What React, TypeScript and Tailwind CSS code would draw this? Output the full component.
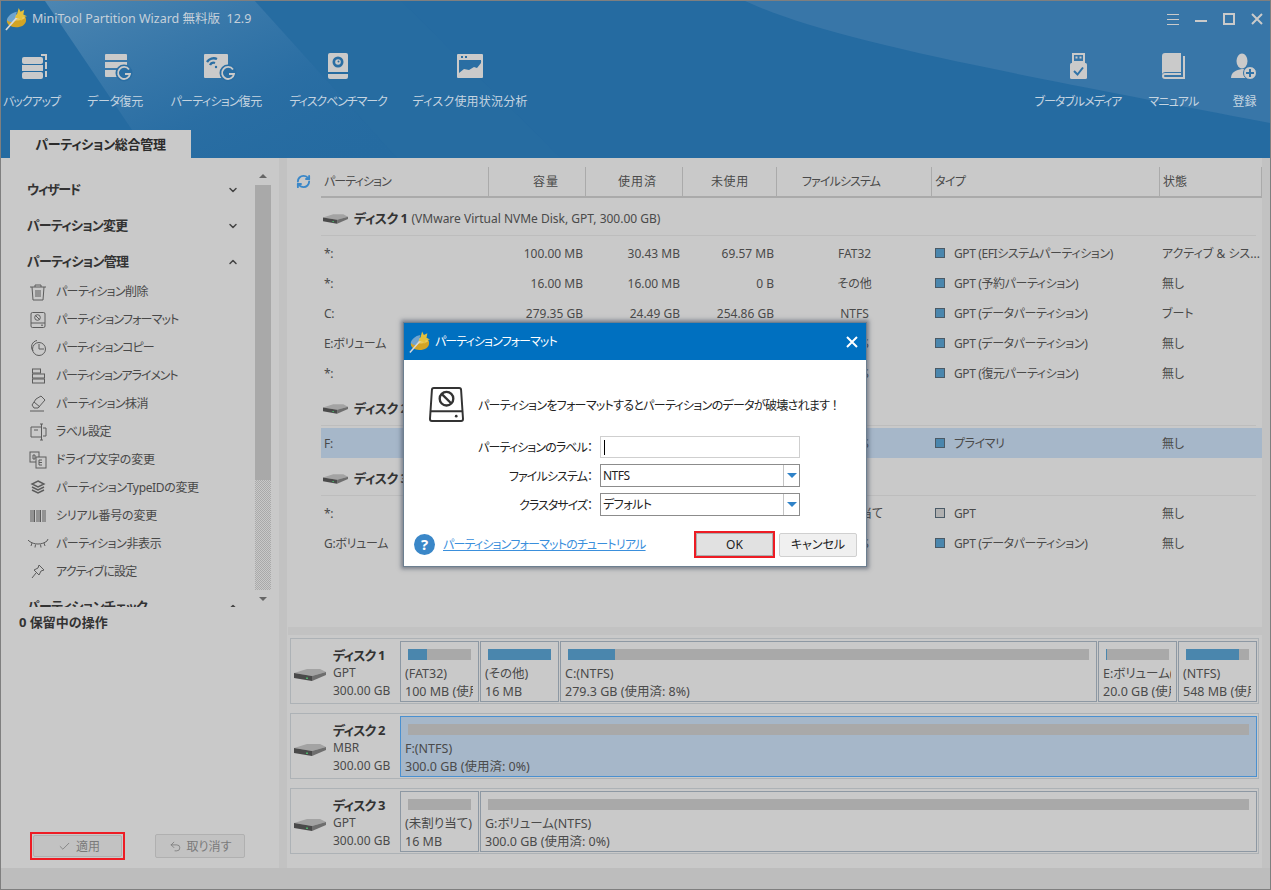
import React from "react";
import { ChevronDown, ChevronUp, RefreshCw, Check, Undo2 } from "lucide-react";

const Logo = ({ className }: { className: string }) => (
  <svg viewBox="0 0 24 24" className={className}>
    <path d="M2 14c0-4 6-7 12-7s9 2 9 6c0 5-5 8-11 8S2 18 2 14z" fill="#d3a425" />
    <path d="M4 12c2-3 6-5 10-5s7 1 8 4c-3 3-15 4-18 1z" fill="#e8c95c" />
    <path d="M2 13c1-4 5-8 11-9l-3 11c-3 1-6 0-8-2z" fill="#6fa4cf" />
    <path d="M1 24L15 8" stroke="#d8d8d8" strokeWidth="1.8" />
    <path d="M15 0l2 4 4-2-1 5 4 2-5 1-1 4-3-3-4 0 2-4z" fill="#e4c13c" />
  </svg>
);

const Redo = ({ x, y }: { x: number; y: number }) => (
  <g transform={`translate(${x} ${y})`}>
    <circle cx="0" cy="0" r="8.5" fill="#2a6ea3" />
    <path d="M5 -3.500A6 6 0 1 0 6 1H1" fill="none" stroke="#cacaca" strokeWidth="1.8" />
  </g>
);

const toolIcons: Record<string, React.ReactNode> = {
  backup: (
    <g fill="#cacaca">
      <rect x="4" y="5" width="21" height="7" rx="2" />
      <rect x="4" y="13" width="21" height="6" />
      <rect x="4" y="20" width="21" height="7" rx="2" />
      <path d="M23 2h6v6h-2V4h-4zM27 10h2v7h-2zM27 19h2v6h-2z" />
    </g>
  ),
  data: (
    <g fill="#cacaca">
      <path d="M4 3a1 1 0 0 1 1-1h20a1 1 0 0 1 1 1v5H4z" />
      <rect x="4" y="10" width="22" height="6" />
      <path d="M4 18h14v7H5a1 1 0 0 1-1-1z" />
      <Redo x={23} y={21} />
    </g>
  ),
  part: (
    <g>
      <path d="M2 3a1 1 0 0 1 1-1h22a1 1 0 0 1 1 1v22a1 1 0 0 1-1 1H3a1 1 0 0 1-1-1z" fill="#cacaca" />
      <path d="M5 10a8 8 0 0 1 10-3M8 13a4 4 0 0 1 5-2" fill="none" stroke="#2a6ea3" strokeWidth="2.4" />
      <circle cx="14" cy="15" r="1.2" fill="#2a6ea3" />
      <Redo x={26} y={21} />
    </g>
  ),
  bench: (
    <g>
      <path d="M4 3a2 2 0 0 1 2-2h16a2 2 0 0 1 2 2v17H4z" fill="#cacaca" />
      <path d="M4 22h20v3a2 2 0 0 1-2 2H6a2 2 0 0 1-2-2z" fill="#cacaca" />
      <circle cx="14" cy="10" r="5.500" fill="#2a6ea3" />
      <circle cx="14" cy="10" r="2.800" fill="#cacaca" />
      <circle cx="14.500" cy="9.500" r="1" fill="#2a6ea3" />
    </g>
  ),
  usage: (
    <g>
      <path d="M1 3a1 1 0 0 1 1-1h24a1 1 0 0 1 1 1v22a1 1 0 0 1-1 1H2a1 1 0 0 1-1-1z" fill="#cacaca" />
      <rect x="3" y="8" width="22" height="16" fill="#2a6ea3" />
      <rect x="5" y="4" width="2" height="2" fill="#2a6ea3" />
      <rect x="9" y="4" width="2" height="2" fill="#2a6ea3" />
      <path d="M3 21l5-4 5 1 5-3 3 1 4-5v13H3z" fill="#cacaca" />
      <path d="M3 19l5-4 5 1 5-3 3 1 4-5" fill="none" stroke="#2a6ea3" strokeWidth="1" />
    </g>
  ),
  usb: (
    <g>
      <path d="M8 1h13v10H8zM10 3v6h9V3z" fill="#cacaca" fillRule="evenodd" />
      <rect x="11.500" y="4.500" width="2" height="2" fill="#cacaca" />
      <rect x="15.500" y="4.500" width="2" height="2" fill="#cacaca" />
      <rect x="6" y="11" width="17" height="16" rx="1.500" fill="#cacaca" />
      <path d="M10 19l3.500 3.500L19 15.500" fill="none" stroke="#2f73a8" strokeWidth="2" />
    </g>
  ),
  book: (
    <g fill="#cacaca">
      <path d="M2 4a3 3 0 0 1 3-3h16v19H6a4 4 0 0 0-4 2z" />
      <path d="M23 4h2v23H5a3 3 0 0 1-3-3 3 3 0 0 1 3-3h16v2H5a1 1 0 0 0 0 2h18V4z" />
    </g>
  ),
  user: (
    <g>
      <ellipse cx="11" cy="9" rx="5.500" ry="7.500" fill="#cacaca" />
      <path d="M0 26c0-6 5-8 11-9 5 0 8 3 8 9z" fill="#cacaca" />
      <circle cx="19" cy="21" r="6.500" fill="#cacaca" stroke="#2f73a8" />
      <path d="M19 17v8M15 21h8" stroke="#2f73a8" strokeWidth="2" />
    </g>
  ),
};

const Tool = ({ icon, label, width, track }: { icon: string; label: string; width: string; track: string }) => (
  <div className={`flex flex-col items-center ${width}`}>
    <svg viewBox="0 0 28 28" className="w-[28px] h-[28px] overflow-visible">
      {toolIcons[icon]}
    </svg>
    <span className={`mt-[13px] text-[12px] leading-[18px] text-[#c5d4e0] whitespace-nowrap ${track}`}>{label}</span>
  </div>
);

const DiskIcon = ({ className }: { className: string }) => (
  <svg viewBox="0 0 32 12" className={className}>
    <path d="M0 4L13 0h13l6 3-14 4z" fill="#a3a3a3" />
    <path d="M0 4l18 3v5L0 9z" fill="#4a4a4a" />
    <path d="M18 7l14-4v3L18 12z" fill="#6e6e6e" />
    <rect x="12" y="8.500" width="2" height="1.500" fill="#4caf6a" />
  </svg>
);

const s = { fill: "none", stroke: "#5c5c5c", strokeWidth: 1 };
const menuIcons: React.ReactNode[] = [
  <g {...s}><path d="M1 4h16M6 4V2h6v2M3 4l1 13h10l1-13M7 7v7M9 7v7M11 7v7" /></g>,
  <g {...s}><rect x="2" y="1.500" width="14" height="15" rx="1.500" /><path d="M2 12h14M12 14.200h2" /><circle cx="8.500" cy="6.500" r="2.800" /><path d="M6.500 4.500l4 4" /></g>,
  <g {...s}><path d="M4 12A6.500 6.500 0 0 1 8 1.500" /><circle cx="10" cy="10" r="6.500" /><path d="M10 5v5h5" /></g>,
  <g {...s}><rect x="3.500" y="2" width="8" height="4" /><rect x="3.500" y="7" width="12" height="4" /><rect x="3.500" y="12" width="12" height="4" /></g>,
  <g {...s}><path d="M7 4l5-3 4 4-7 8H5l-2-3zM5 7l6 5M1 16h14" /></g>,
  <g {...s}><path d="M12 4H2v10h10M14 1h-3M14 17h-3M12.500 1v16M14 5h3v8h-3M5 7h4" /></g>,
  <g {...s}><rect x="1" y="1" width="9" height="10" fill="#c9c9c9" /><rect x="7" y="6" width="10" height="11" fill="#c9c9c9" /><path d="M4 4v4h2v-4zM10 9H13M10 11.500H13M10 14h3M10 9v5" /></g>,
  <g {...s}><path d="M9 2l6 3-6 3-6-3zM3 8l6 3 6-3M3 11l6 3 6-3" strokeWidth="1.400" /></g>,
  <g {...s}><path d="M2 3v12M4 3v12M5.500 3v12M8 3v12M10 3v12M11.500 3v12M14 3v12M16 3v12" /></g>,
  <g {...s}><path d="M0 6c5 4 13 4 18 0M3 8l-1 3M6.500 9.500l-.5 3M11.500 9.500l.5 3M15 8l1 3M0 6l-1-1M18 6l1-2" /></g>,
  <g {...s}><path d="M10 2l5 5-3 1-2 4-5-5 4-2zM7 10l-4 5" /></g>,
];

const menu = [
  { t: "パーティション削除", c: "tracking-[-0.6px]" },
  { t: "パーティションフォーマット", c: "tracking-[-0.85px]" },
  { t: "パーティションコピー", c: "tracking-[-1px]" },
  { t: "パーティションアライメント", c: "tracking-[-1.1px]" },
  { t: "パーティション抹消", c: "tracking-[-0.6px]" },
  { t: "ラベル設定", c: "tracking-[-0.6px]" },
  { t: "ドライブ文字の変更", c: "tracking-[-0.2px]" },
  { t: "パーティションTypeIDの変更", c: "tracking-[-0.35px]" },
  { t: "シリアル番号の変更", c: "tracking-[-0.2px]" },
  { t: "パーティション非表示", c: "tracking-[-0.4px]" },
  { t: "アクティブに設定", c: "tracking-[-0.8px]" },
];

const SideHead = ({ label, open, track }: { label: string; open?: boolean; track: string }) => (
  <div className="h-[36px] flex items-center justify-between pl-[26px] pr-[16px] shrink-0">
    <span className={`text-[13px] font-bold text-[#333] ${track}`}>{label}</span>
    {open ? <ChevronUp size={12} strokeWidth={3} color="#444" /> : <ChevronDown size={12} strokeWidth={3} color="#444" />}
  </div>
);

type Row = { name: string; cap: string; used: string; free: string; fs: string; type: string; state: string; sel?: boolean; gray?: boolean };

const disk1: Row[] = [
  { name: "*:", cap: "100.00 MB", used: "30.43 MB", free: "69.57 MB", fs: "FAT32", type: "GPT (EFIシステムパーティション)", state: "アクティブ & シス..." },
  { name: "*:", cap: "16.00 MB", used: "16.00 MB", free: "0 B", fs: "その他", type: "GPT (予約パーティション)", state: "無し" },
  { name: "C:", cap: "279.35 GB", used: "24.49 GB", free: "254.86 GB", fs: "NTFS", type: "GPT (データパーティション)", state: "ブート" },
  { name: "E:ボリューム", cap: "20.00 GB", used: "104.00 MB", free: "19.90 GB", fs: "NTFS", type: "GPT (データパーティション)", state: "無し" },
  { name: "*:", cap: "548.00 MB", used: "467.00 MB", free: "81.00 MB", fs: "NTFS", type: "GPT (復元パーティション)", state: "無し" },
];
const disk2: Row[] = [
  { name: "F:", cap: "300.00 GB", used: "108.00 MB", free: "299.89 GB", fs: "NTFS", type: "プライマリ", state: "無し", sel: true },
];
const disk3: Row[] = [
  { name: "*:", cap: "16.00 MB", used: "0 B", free: "16.00 MB", fs: "未割り当て", type: "GPT", state: "無し", gray: true },
  { name: "G:ボリューム", cap: "300.00 GB", used: "108.00 MB", free: "299.89 GB", fs: "NTFS", type: "GPT (データパーティション)", state: "無し" },
];

const cols = "grid grid-cols-[168px_97px_97px_94px_155px_228px_102px]";

const TableRow = ({ r }: { r: Row }) => (
  <div className={`${cols} h-[30px] items-center text-[12px] text-[#4a4a4a] whitespace-nowrap ${r.sel ? "bg-[#a6b7c9]" : ""}`}>
    <span className="pl-[3px] pt-px tracking-[-0.3px]">{r.name}</span>
    <span className="text-right pr-[3px] pt-px">{r.cap}</span>
    <span className="text-right pr-[3px] pt-px">{r.used}</span>
    <span className="text-right pr-[3px] pt-px">{r.free}</span>
    <span className="text-center pt-px">{r.fs}</span>
    <span className="flex items-center pl-[3px]">
      <span className={`w-[10px] h-[10px] border border-[#4a5a66] mr-[9px] ${r.gray ? "bg-[#b0b0b0]" : "bg-[#4a86ad]"}`} />
      <span className="pt-px tracking-[-0.4px]">{r.type}</span>
    </span>
    <span className="pl-[2px] pt-px">{r.state}</span>
  </div>
);

const DiskHead = ({ name, info }: { name: string; info?: string }) => (
  <div className="h-[38px] flex items-center pl-[2px] pt-[5px] border-b border-[#bdbdbd] mb-[2px] mr-[6px] text-[#4a4a4a] whitespace-nowrap">
    <DiskIcon className="w-[25px] h-[10px] mr-[6px]" />
    <span className="text-[13px] font-bold text-[#333] tracking-[-0.5px]">{name}</span>
    {info && <span className="text-[12px] ml-[4px]">{info}</span>}
  </div>
);

type Seg = { l1: string; l2: string; fill?: string; wide?: boolean };

const Segment = ({ seg, sel }: { seg: Seg; sel?: boolean }) => (
  <div className={`h-[61px] border pt-[7px] text-[12.5px] leading-[18px] text-[#4a4a4a] ${seg.wide ? "flex-1 min-w-0" : "w-[79px] shrink-0"} ${sel ? "border-[#4a90d0] bg-[#a6b7c9]" : "border-[#8d98a3]"}`}>
    <div className="mx-[7px] h-[11px] bg-[#a9a9a9]">
      {seg.fill && <div className={`h-full bg-[#4a86ad] ${seg.fill}`} />}
    </div>
    <div className="ml-[4px] mr-[5px] mt-[5px] overflow-hidden whitespace-nowrap">
      <div>{seg.l1}</div>
      <div>{seg.l2}</div>
    </div>
  </div>
);

const DiskCard = ({ name, kind, segs, sel }: { name: string; kind: string; segs: Seg[]; sel?: boolean }) => (
  <div className="h-[66px] flex items-center border border-[#adb2b6] pr-[1px]">
    <div className="w-[109px] shrink-0 flex items-center pl-[3px]">
      <DiskIcon className="w-[32px] h-[12px] mt-[8px] mr-[7px]" />
      <div className="pt-[4px] text-[12px] leading-[18px] text-[#4a4a4a] whitespace-nowrap">
        <div className="text-[13px] font-bold text-[#333] tracking-[-0.8px]">{name}</div>
        <div>{kind}</div>
        <div>300.00 GB</div>
      </div>
    </div>
    <div className="flex-1 min-w-0 flex gap-[1px]">
      {segs.map((seg, i) => (
        <Segment key={i} seg={seg} sel={sel} />
      ))}
    </div>
  </div>
);

const Combo = ({ value }: { value: string }) => (
  <div className="h-[23px] flex items-center border border-[#8c8c8c] text-[12px] text-[#222]">
    <span className="flex-1 pl-[2px] pt-px tracking-[-0.5px]">{value}</span>
    <span className="w-[16px] h-full border-l border-[#c4c4c4] flex items-center justify-center">
      <span className="w-0 h-0 border-x-[5px] border-x-transparent border-t-[5px] border-t-[#2f82c8]" />
    </span>
  </div>
);

export default function App() {
  return (
    <div className="relative w-[1271px] h-[890px] flex flex-col overflow-hidden border border-[#7f7f7f] bg-[#c9c9c9] [font-family:'Noto_Sans','Noto_Sans_CJK_JP',sans-serif] [font-feature-settings:'palt']">
      {/* header */}
      <div className="relative h-[157px] shrink-0 flex flex-col bg-[#256ba1]">
        <svg className="absolute inset-0 w-full h-full" viewBox="0 0 1269 157" preserveAspectRatio="none">
          <defs>
            <linearGradient id="streak" x1="0" y1="0" x2="1" y2="1">
              <stop offset="0" stopColor="#5a8fb8" stopOpacity="0.75" />
              <stop offset="0.6" stopColor="#2d70a5" stopOpacity="0.6" />
              <stop offset="1" stopColor="#256ba1" stopOpacity="0" />
            </linearGradient>
          </defs>
          <path d="M44 0L150 157H396L254 0z" fill="url(#streak)" />
          <path d="M254 0L396 157H560L400 0z" fill="#2a6ea3" fillOpacity="0.25" />
          <path d="M744 0C830 40 1000 70 1269 122V0z" fill="#3876a8" />
        </svg>
        <div className="relative h-[36px] shrink-0 flex items-center pl-[4px]">
          <Logo className="w-[22px] h-[24px] mr-[5px]" />
          <span className="text-[12.500px] text-[#c5d0da]">MiniTool Partition Wizard 無料版&nbsp; 12.9</span>
          <div className="ml-auto flex items-center gap-[16px] pr-[7px]">
            <svg width="12" height="11" viewBox="0 0 12 11" stroke="#cacaca"><path d="M0 .5h12M0 5.500h12M0 10.500h12" /></svg>
            <svg width="12" height="11" viewBox="0 0 12 11" stroke="#cacaca" strokeWidth="2"><path d="M0 7h12" /></svg>
            <svg width="12" height="12" viewBox="0 0 12 12" fill="none" stroke="#cacaca" strokeWidth="2"><rect x="1" y="1" width="10" height="10" /></svg>
            <svg width="12" height="12" viewBox="0 0 12 12" stroke="#cacaca" strokeWidth="2"><path d="M1 1l10 10M11 1L1 11" /></svg>
          </div>
        </div>
        <div className="relative flex pt-[15px]">
          <Tool icon="backup" label="バックアップ" width="w-[61px]" track="tracking-[-1.1px]" />
          <Tool icon="data" label="データ復元" width="w-[106px]" track="tracking-[-0.4px]" />
          <Tool icon="part" label="パーティション復元" width="w-[96px]" track="tracking-[-0.7px]" />
          <Tool icon="bench" label="ディスクベンチマーク" width="w-[148px]" track="tracking-[-1.1px]" />
          <Tool icon="usage" label="ディスク使用状況分析" width="w-[116px]" track="tracking-[0.2px]" />
          <div className="ml-auto mr-[2px] flex">
            <Tool icon="usb" label="ブータブルメディア" width="w-[96px]" track="tracking-[-1px]" />
            <Tool icon="book" label="マニュアル" width="w-[95px]" track="tracking-[-0.8px]" />
            <Tool icon="user" label="登録" width="w-[47px]" track="" />
          </div>
        </div>
        <div className="relative mt-auto ml-[9px] w-[181px] h-[28px] pt-[2px] bg-[#c9c9c9] flex items-center justify-center text-[13px] font-bold text-[#2b2b2b] tracking-[-0.3px]">
          パーティション総合管理
        </div>
      </div>

      {/* body */}
      <div className="flex-1 min-h-0 flex">
        {/* left */}
        <div className="w-[278px] shrink-0 flex flex-col">
          <div className="h-[449px] shrink-0 flex overflow-hidden">
            <div className="w-[254px] shrink-0 pt-[14px]">
              <SideHead label="ウィザード" track="tracking-[-1.4px]" />
              <SideHead label="パーティション変更" track="tracking-[-0.8px]" />
              <SideHead label="パーティション管理" track="tracking-[-0.7px]" open />
              <div className="-mt-[2px] mb-[3px]">
                {menu.map((m, i) => (
                  <div key={m.t} className="h-[28px] flex items-center pl-[28px] text-[12px] text-[#484848] whitespace-nowrap">
                    <svg viewBox="0 0 18 18" className="w-[18px] h-[18px] mr-[9px] overflow-visible">{menuIcons[i]}</svg>
                    <span className={m.c}>{m.t}</span>
                  </div>
                ))}
              </div>
              <SideHead label="パーティションチェック" track="tracking-[-0.7px]" open />
            </div>
            <div className="w-[16px] shrink-0 flex flex-col items-center">
              <div className="h-[27px] w-full flex items-center justify-center pt-[8px]">
                <span className="w-0 h-0 border-x-[4px] border-x-transparent border-b-[4px] border-b-[#666]" />
              </div>
              <div className="h-[295px] w-full bg-[#a9a9a9]" />
              <div className="h-[110px] w-full bg-[repeating-conic-gradient(#a9a9a9_0_25%,#c9c9c9_0_50%)] bg-[length:2px_2px]" />
              <div className="flex-1 w-full flex items-center justify-center">
                <span className="w-0 h-0 border-x-[4px] border-x-transparent border-t-[4px] border-t-[#666]" />
              </div>
            </div>
          </div>
          <div className="pl-[18px] pt-[6px] text-[13px] font-bold text-[#333]">0 保留中の操作</div>
          <div className="mt-auto pb-[8px] pl-[29px] flex items-center">
            <div className="w-[95px] h-[28px] border-2 border-[#ed1c24] p-[1px]">
              <div className="h-full flex items-center justify-center gap-[5px] pl-[3px] border border-[#b0b0b0] rounded-[2px] bg-[#c2c2c2] text-[12px] text-[#7a7a7a]">
                <Check size={13} strokeWidth={1.500} /><span className="pt-[2px]">適用</span>
              </div>
            </div>
            <div className="ml-[30px] w-[90px] h-[24px] flex items-center justify-center gap-[5px] border border-[#b0b0b0] rounded-[2px] bg-[#c2c2c2] text-[12px] text-[#7a7a7a]">
              <Undo2 size={13} strokeWidth={1.500} /><span className="pt-[2px]">取り消す</span>
            </div>
          </div>
        </div>
        <div className="w-[8px] shrink-0 bg-[#c2c2c2]" />

        {/* right */}
        <div className="flex-1 min-w-0 flex flex-col">
          <div className="h-[469px] shrink-0 pt-[9px]">
            <div className="flex h-[31px]">
              <div className="w-[34px] flex justify-center pt-[7px] pr-[2px]">
                <RefreshCw size={15} strokeWidth={3} color="#3a87c8" />
              </div>
              <div className={`${cols} flex-1 border-b-2 border-[#aaa] text-[12px] text-[#4a4a4a] items-center whitespace-nowrap`}>
                <span className="h-full flex items-center pl-[3px] pt-px border-r border-[#aaa] tracking-[-0.9px]">パーティション</span>
                <span className="h-full flex items-center justify-end pr-[26px] pt-px border-r border-[#aaa] tracking-[1px]">容量</span>
                <span className="h-full flex items-center justify-end pr-[25px] pt-px border-r border-[#aaa] tracking-[1px]">使用済</span>
                <span className="h-full flex items-center justify-end pr-[27px] pt-px border-r border-[#aaa] tracking-[0.7px]">未使用</span>
                <span className="h-full flex items-center justify-center pr-[26px] pt-px border-r border-[#aaa] tracking-[-0.9px]">ファイルシステム</span>
                <span className="h-full flex items-center pl-[3px] pt-px border-r border-[#aaa] tracking-[-0.5px]">タイプ</span>
                <span className="h-full flex items-center pl-[3px] pt-px border-r border-[#aaa]">状態</span>
              </div>
            </div>
            <div className="pl-[34px]">
              <DiskHead name="ディスク 1" info="(VMware Virtual NVMe Disk, GPT, 300.00 GB)" />
              {disk1.map((r, i) => <TableRow key={i} r={r} />)}
              <DiskHead name="ディスク 2" info="(VMware Virtual NVMe Disk, MBR, 300.00 GB)" />
              {disk2.map((r, i) => <TableRow key={i} r={r} />)}
              <DiskHead name="ディスク 3" info="(VMware Virtual NVMe Disk, GPT, 300.00 GB)" />
              {disk3.map((r, i) => <TableRow key={i} r={r} />)}
            </div>
          </div>
          <div className="h-[8px] shrink-0 bg-[#c2c2c2] ml-px" />
          <div className="pl-[3px] pr-[3px] pt-[3px] flex flex-col gap-[9px]">
            <DiskCard
              name="ディスク 1"
              kind="GPT"
              segs={[
                { l1: "(FAT32)", l2: "100 MB (使用済: 30%)", fill: "w-[30%]" },
                { l1: "(その他)", l2: "16 MB", fill: "w-full" },
                { l1: "C:(NTFS)", l2: "279.3 GB (使用済: 8%)", fill: "w-[9%]", wide: true },
                { l1: "E:ボリューム(NTFS)", l2: "20.0 GB (使用済: 0%)", fill: "w-[1px]" },
                { l1: "(NTFS)", l2: "548 MB (使用済: 85%)", fill: "w-[84%]" },
              ]}
            />
            <DiskCard name="ディスク 2" kind="MBR" sel segs={[{ l1: "F:(NTFS)", l2: "300.0 GB (使用済: 0%)", wide: true }]} />
            <DiskCard
              name="ディスク 3"
              kind="GPT"
              segs={[
                { l1: "(未割り当て)", l2: "16 MB" },
                { l1: "G:ボリューム(NTFS)", l2: "300.0 GB (使用済: 0%)", wide: true },
              ]}
            />
          </div>
        </div>
        <div className="w-[8px] shrink-0 bg-[#c2c2c2]" />
      </div>

      <div className="h-[21px] shrink-0 bg-[#bdbdbd]" />

      {/* dialog */}
      <div className="absolute left-[402px] top-[321px] w-[464px] h-[245px] flex flex-col bg-white border border-[#6d7f90] shadow-[0_0_4px_2px_rgba(60,70,90,0.55)]">
        <div className="h-[37px] shrink-0 flex items-center bg-[#0070c0] pl-[5px] pr-[8px]">
          <Logo className="w-[21px] h-[24px] mr-[5px]" />
          <span className="text-[12px] text-white tracking-[-0.9px]">パーティションフォーマット</span>
          <svg className="ml-auto" width="12" height="12" viewBox="0 0 12 12" stroke="white" strokeWidth="2"><path d="M1 1l10 10M11 1L1 11" /></svg>
        </div>
        <div className="flex items-center pt-[26px] pl-[25px]">
          <svg viewBox="0 0 36 38" className="w-[35px] h-[37px]" fill="none" stroke="#333" strokeWidth="2">
            <path d="M5 2h26a2 2 0 0 1 2 2l2 30a2 2 0 0 1-2 2H3a2 2 0 0 1-2-2L3 4a2 2 0 0 1 2-2z" />
            <path d="M1 26h34" />
            <circle cx="18" cy="13" r="7" strokeWidth="2.400" />
            <path d="M13 8l10 10" strokeWidth="2.400" />
            <circle cx="28" cy="31" r="1.400" fill="#333" stroke="none" />
          </svg>
          <span className="ml-[14px] pt-[3px] text-[12px] text-[#222] whitespace-nowrap tracking-[-0.7px]">パーティションをフォーマットするとパーティションのデータが破壊されます ！</span>
        </div>
        <div className="mt-[13px] grid grid-cols-[188px_200px] gap-x-[8px] gap-y-[6px] items-center text-[12px] text-[#222]">
          <span className="text-right pt-[2px] tracking-[-0.9px]">パーティションのラベル：</span>
          <div className="h-[22px] border border-[#cfcfcf] flex items-center pl-[3px]">
            <span className="w-px h-[15px] bg-black" />
          </div>
          <span className="text-right pt-[2px] tracking-[-0.9px]">ファイルシステム：</span>
          <Combo value="NTFS" />
          <span className="text-right pt-[2px] tracking-[-1px]">クラスタサイズ：</span>
          <Combo value="デフォルト" />
        </div>
        <div className="mt-[15px] flex items-center pl-[10px] pr-[9px]">
          <span className="w-[21px] h-[21px] rounded-full bg-[#3a87c8] text-white text-[15px] font-bold flex items-center justify-center">?</span>
          <span className="ml-[8px] pt-px text-[12px] text-[#3a8fdc] underline whitespace-nowrap tracking-[-0.8px]">パーティションフォーマットのチュートリアル</span>
          <div className="ml-auto w-[81px] h-[27px] border-2 border-[#ed1c24] flex">
            <div className="flex-1 flex items-center justify-center pt-px bg-[#e1e1e1] border border-[#adadad] text-[12px] text-[#222]">OK</div>
          </div>
          <div className="ml-[4px] w-[78px] h-[24px] flex items-center justify-center pt-px bg-[#f0f0f0] border border-[#d0d0d0] rounded-[2px] text-[12px] text-[#222]">キャンセル</div>
        </div>
      </div>
    </div>
  );
}
